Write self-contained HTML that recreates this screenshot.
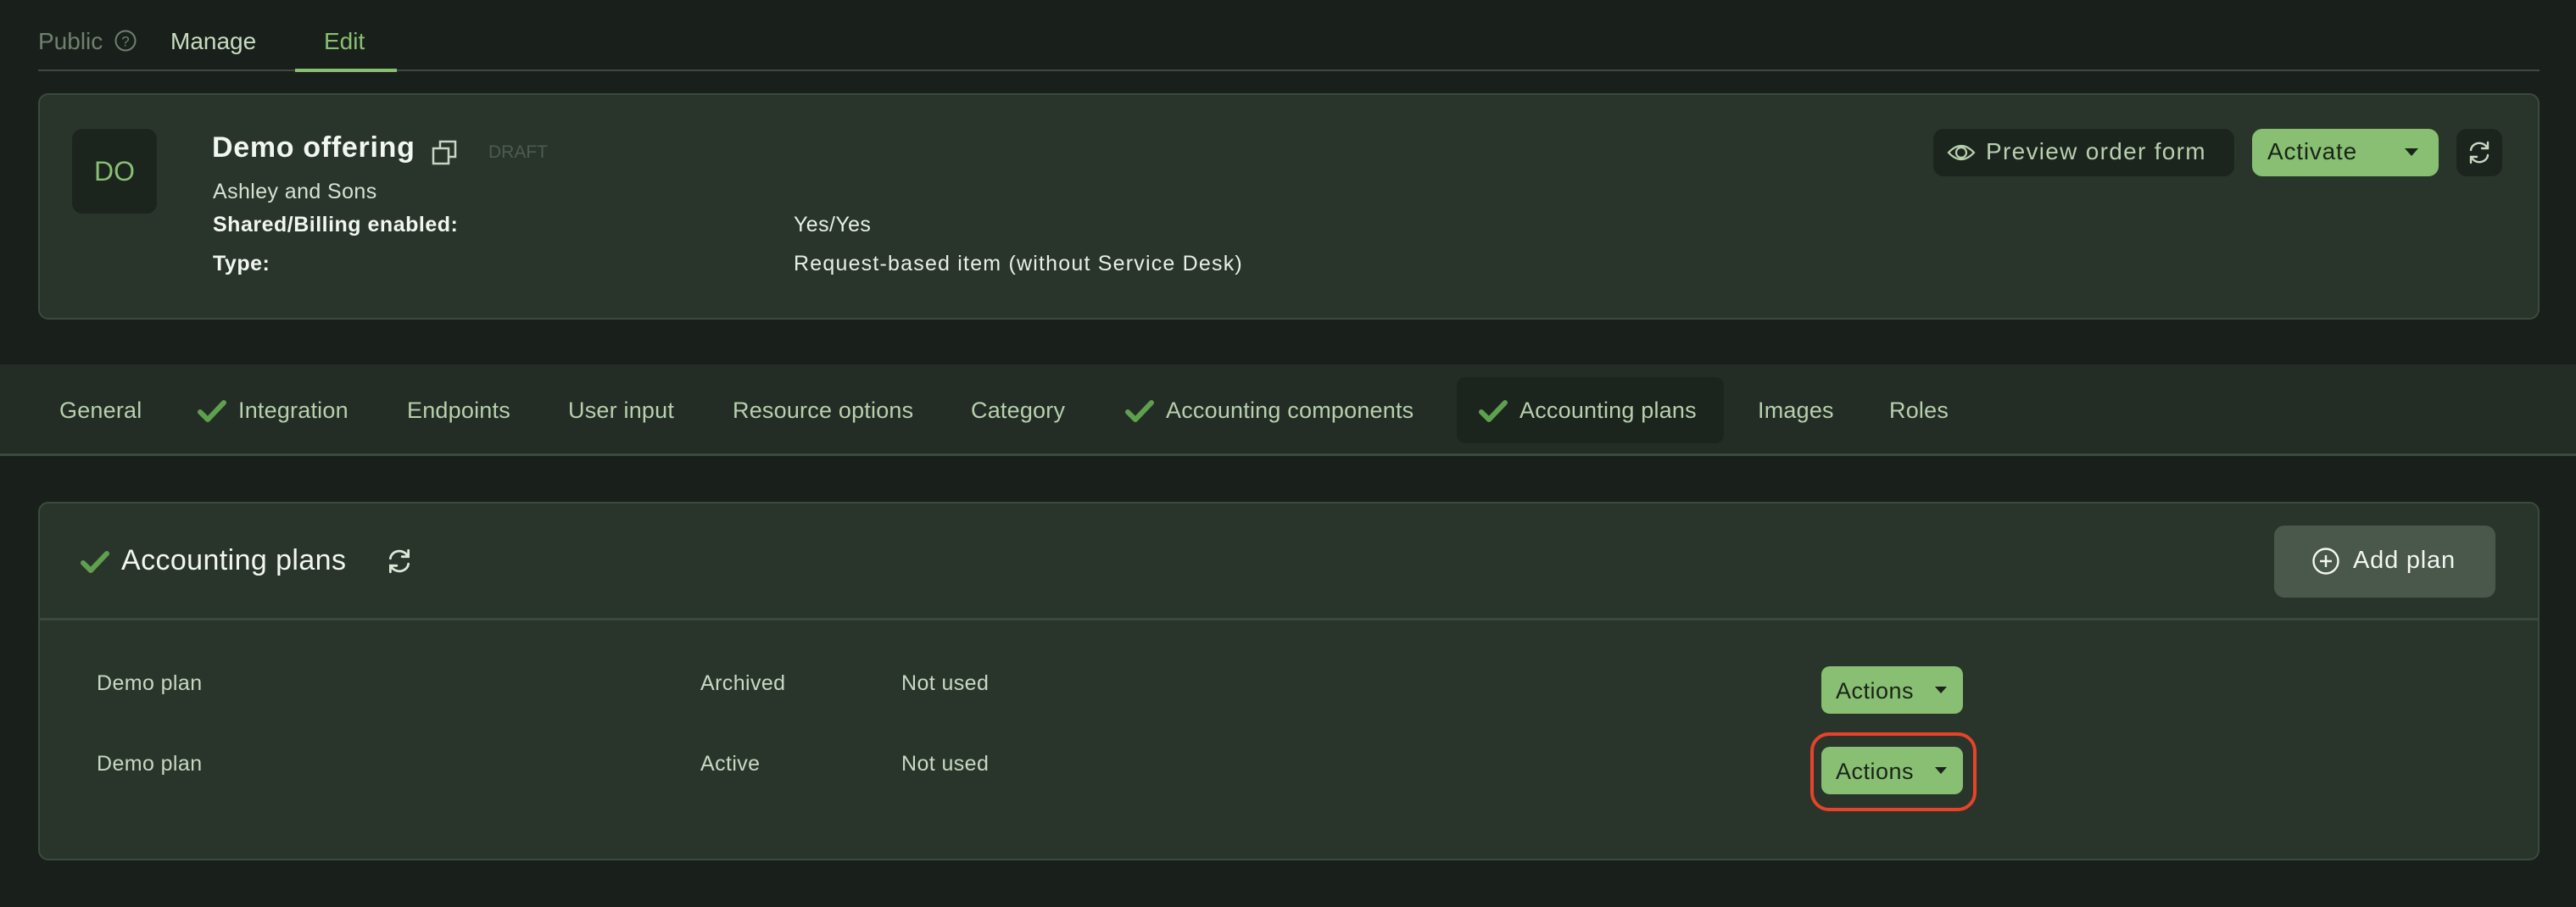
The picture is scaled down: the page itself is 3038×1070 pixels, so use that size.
<!DOCTYPE html>
<html><head><meta charset="utf-8"><style>
*{margin:0;padding:0;box-sizing:border-box}
body{width:3038px;height:1070px;background:#19201b;font-family:"Liberation Sans",sans-serif;position:relative;overflow:hidden}
.a{position:absolute;white-space:nowrap;line-height:1}
.card{position:absolute;background:#29352b;border:2px solid #3b4a3e;border-radius:12px}
.btn{position:absolute;border-radius:12px}
.tab{position:absolute;top:471px;font-size:27px;color:#b8d0ad;line-height:1;white-space:nowrap;letter-spacing:0.2px}
.r{letter-spacing:0.4px}
</style></head><body>

<!-- top tabs -->
<div class="a" style="left:45px;top:35px;font-size:28px;color:#6f806e">Public</div>
<svg class="a" style="left:134px;top:34px" width="28" height="28" viewBox="0 0 28 28"><circle cx="14" cy="14" r="11.5" fill="none" stroke="#6f806e" stroke-width="2"/><text x="14" y="20.5" font-size="17" text-anchor="middle" fill="#6f806e" font-family="Liberation Sans">?</text></svg>
<div class="a" style="left:201px;top:35px;font-size:28px;color:#c8dcc0">Manage</div>
<div class="a" style="left:382px;top:35px;font-size:28px;color:#88bf72">Edit</div>
<div class="a" style="left:45px;top:82px;width:2950px;height:2px;background:#3d4b40"></div>
<div class="a" style="left:348px;top:81px;width:120px;height:4px;background:#88bf72"></div>

<!-- card 1 -->
<div class="card" style="left:45px;top:110px;width:2950px;height:267px"></div>
<div class="a" style="left:85px;top:152px;width:100px;height:100px;background:#1c241e;border-radius:12px;color:#88bf72;font-size:32px;display:flex;align-items:center;justify-content:center">DO</div>
<div class="a" style="left:250px;top:157px;font-size:34px;font-weight:bold;color:#f2f6f0;letter-spacing:0.7px">Demo offering</div>
<svg class="a" style="left:508px;top:164px" width="34" height="32" viewBox="0 0 34 32"><rect x="11" y="3" width="18" height="18" fill="none" stroke="#c8d4c4" stroke-width="2.5"/><rect x="3" y="11" width="18" height="18" fill="#29352b" stroke="#c8d4c4" stroke-width="2.5"/></svg>
<div class="a" style="left:576px;top:169px;font-size:21px;color:#4d5b4f">DRAFT</div>
<div class="a r" style="left:251px;top:214px;font-size:25px;color:#d6e2d2">Ashley and Sons</div>
<div class="a" style="left:251px;top:253px;font-size:25px;font-weight:bold;color:#f2f6f0;letter-spacing:0.5px">Shared/Billing enabled:</div>
<div class="a r" style="left:936px;top:253px;font-size:25px;color:#e8efe6">Yes/Yes</div>
<div class="a" style="left:251px;top:299px;font-size:25px;font-weight:bold;color:#f2f6f0;letter-spacing:0.5px">Type:</div>
<div class="a" style="left:936px;top:299px;font-size:25px;color:#e8efe6;letter-spacing:1.2px">Request-based item (without Service Desk)</div>

<div class="btn" style="left:2280px;top:152px;width:355px;height:56px;background:#1c241e"></div>
<svg class="a" style="left:2296px;top:166px" width="34" height="28" viewBox="0 0 34 28"><path d="M2 14 Q17 -2 32 14 Q17 30 2 14Z" fill="none" stroke="#b8d0ad" stroke-width="2.2"/><circle cx="17" cy="14" r="6" fill="none" stroke="#b8d0ad" stroke-width="2.2"/></svg>
<div class="a" style="left:2342px;top:165px;font-size:28px;color:#b8d0ad;letter-spacing:1.3px">Preview order form</div>
<div class="btn" style="left:2656px;top:152px;width:220px;height:56px;background:#88bf72"></div>
<div class="a" style="left:2674px;top:165px;font-size:28px;color:#1a2419;letter-spacing:0.8px">Activate</div>
<div class="a" style="left:2836px;top:175px;width:0;height:0;border-left:8px solid transparent;border-right:8px solid transparent;border-top:9px solid #1a2419"></div>
<div class="btn" style="left:2897px;top:152px;width:54px;height:56px;background:#1c241e"></div>
<svg class="a" style="left:2908px;top:165px" width="32" height="30" viewBox="0 0 32 30"><g fill="none" stroke="#c8d8c2" stroke-width="2.4" stroke-linecap="round"><path d="M6 12 A10 9 0 0 1 25 9"/><path d="M26 3 L26 10 L19 10"/><path d="M26 18 A10 9 0 0 1 7 21"/><path d="M6 27 L6 20 L13 20"/></g></svg>

<!-- tab bar -->
<div class="a" style="left:0;top:430px;width:3038px;height:108px;background:#232d26;border-bottom:3px solid #3b4a3e"></div>
<div class="a" style="left:1718px;top:445px;width:315px;height:78px;background:#1c241e;border-radius:10px"></div>
<svg width="0" height="0" style="position:absolute"><defs><path id="ck" d="M3 16 L12 25 L31 5" fill="none" stroke="#5fa04e" stroke-width="6" stroke-linecap="round" stroke-linejoin="round"/></defs></svg>
<div class="tab" style="left:70px">General</div>
<svg class="a" style="left:233px;top:470px" width="34" height="30"><use href="#ck"/></svg>
<div class="tab" style="left:281px">Integration</div>
<div class="tab" style="left:480px">Endpoints</div>
<div class="tab" style="left:670px">User input</div>
<div class="tab" style="left:864px">Resource options</div>
<div class="tab" style="left:1145px">Category</div>
<svg class="a" style="left:1327px;top:470px" width="34" height="30"><use href="#ck"/></svg>
<div class="tab" style="left:1375px">Accounting components</div>
<svg class="a" style="left:1744px;top:470px" width="34" height="30"><use href="#ck"/></svg>
<div class="tab" style="left:1792px">Accounting plans</div>
<div class="tab" style="left:2073px">Images</div>
<div class="tab" style="left:2228px">Roles</div>

<!-- card 2 -->
<div class="card" style="left:45px;top:592px;width:2950px;height:423px"></div>
<div class="a" style="left:47px;top:729px;width:2946px;height:3px;background:#3b4a3e"></div>
<svg class="a" style="left:95px;top:648px" width="34" height="30"><use href="#ck"/></svg>
<div class="a" style="left:143px;top:644px;font-size:34px;color:#f2f6f0;letter-spacing:0.4px">Accounting plans</div>
<svg class="a" style="left:454px;top:646px" width="34" height="32" viewBox="0 0 32 30"><g fill="none" stroke="#dde8d8" stroke-width="2.6" stroke-linecap="round"><path d="M6 12 A10 9 0 0 1 25 9"/><path d="M26 3 L26 10 L19 10"/><path d="M26 18 A10 9 0 0 1 7 21"/><path d="M6 27 L6 20 L13 20"/></g></svg>

<div class="btn" style="left:2682px;top:620px;width:261px;height:85px;background:#4a574b"></div>
<svg class="a" style="left:2726px;top:645px" width="34" height="34" viewBox="0 0 34 34"><circle cx="17" cy="17" r="14.5" fill="none" stroke="#f2f6f0" stroke-width="2.4"/><path d="M17 10V24M10 17H24" stroke="#f2f6f0" stroke-width="2.4"/></svg>
<div class="a" style="left:2775px;top:647px;font-size:29px;color:#f2f6f0;letter-spacing:0.8px">Add plan</div>

<div class="a r" style="left:114px;top:794px;font-size:25px;color:#c8d8c2">Demo plan</div>
<div class="a r" style="left:826px;top:794px;font-size:25px;color:#c8d8c2">Archived</div>
<div class="a r" style="left:1063px;top:794px;font-size:25px;color:#c8d8c2">Not used</div>
<div class="a r" style="left:114px;top:889px;font-size:25px;color:#c8d8c2">Demo plan</div>
<div class="a r" style="left:826px;top:889px;font-size:25px;color:#c8d8c2">Active</div>
<div class="a r" style="left:1063px;top:889px;font-size:25px;color:#c8d8c2">Not used</div>

<div class="btn" style="left:2148px;top:786px;width:167px;height:56px;background:#88bf72;border-radius:10px"></div>
<div class="a" style="left:2165px;top:802px;font-size:27px;color:#1a2419;letter-spacing:0.5px">Actions</div>
<div class="a" style="left:2282px;top:810px;width:0;height:0;border-left:7px solid transparent;border-right:7px solid transparent;border-top:8px solid #1a2419"></div>
<div class="btn" style="left:2148px;top:881px;width:167px;height:56px;background:#88bf72;border-radius:10px"></div>
<div class="a" style="left:2165px;top:897px;font-size:27px;color:#1a2419;letter-spacing:0.5px">Actions</div>
<div class="a" style="left:2282px;top:905px;width:0;height:0;border-left:7px solid transparent;border-right:7px solid transparent;border-top:8px solid #1a2419"></div>
<div class="a" style="left:2135px;top:864px;width:196px;height:93px;border:4px solid #e8432a;border-radius:22px"></div>
</body></html>
